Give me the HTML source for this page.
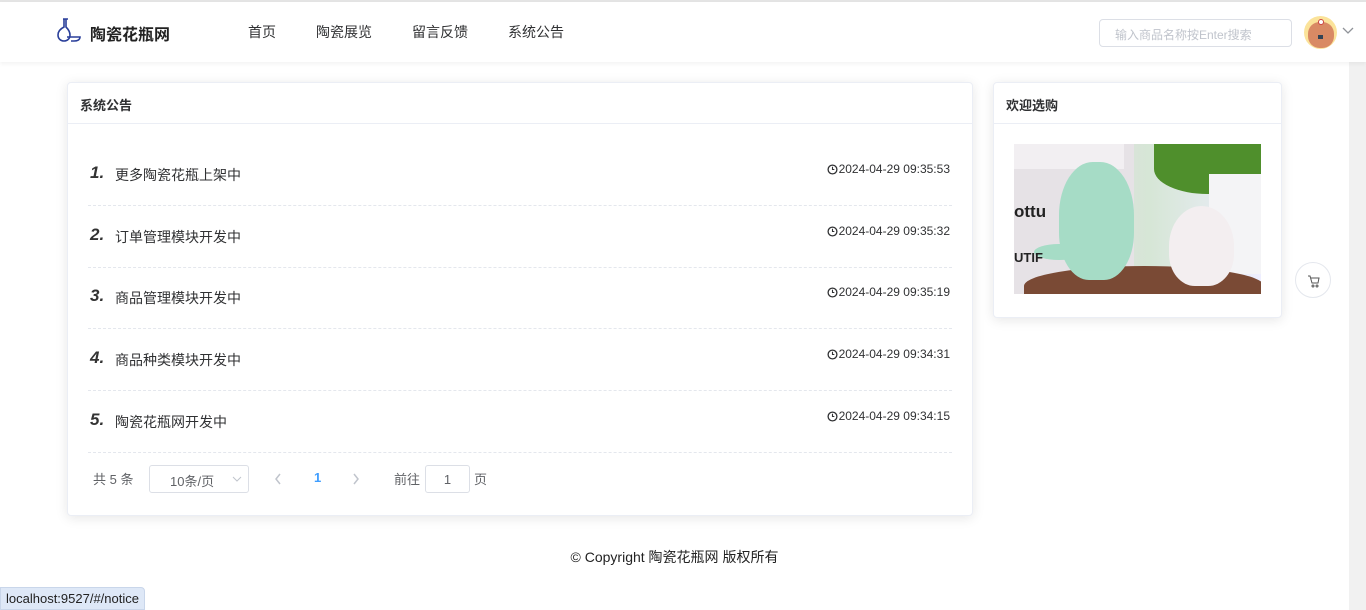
<!DOCTYPE html>
<html><head><meta charset="utf-8"><style>
*{margin:0;padding:0;box-sizing:border-box}
body{width:1366px;height:610px;overflow:hidden;background:#fff;font-family:"Liberation Sans","Noto Sans CJK SC",sans-serif;color:#303133;position:relative}
.topline{position:absolute;left:0;top:0;width:1366px;height:2px;background:#e4e4e4}
.header{position:absolute;left:0;top:2px;width:1366px;height:60px;background:#fff;box-shadow:0 2px 4px rgba(0,0,0,.05);z-index:2}
.logo{position:absolute;left:90px;top:19px;font-size:16px;font-weight:bold;color:#222}
.nav a{position:absolute;top:20px;font-size:14px;color:#303133;text-decoration:none}
.search{position:absolute;left:1099px;top:17px;width:193px;height:28px;border:1px solid #dcdfe6;border-radius:4px;font-size:12px;color:#c0c4cc;padding:6px 15px}
.avatar{position:absolute;left:1304px;top:14px;width:33px;height:33px;border-radius:50%;background:#fbe39a;overflow:hidden}
.scroll{position:absolute;left:1349px;top:62px;width:17px;height:548px;background:#f1f1f1}
.card{position:absolute;background:#fff;border:1px solid #ebeef5;border-radius:4px;box-shadow:0 2px 12px rgba(0,0,0,.1)}
.card .hd{height:41px;border-bottom:1px solid #ebeef5;padding:12px 12px;font-size:13px;font-weight:bold;color:#303133}
.row{position:absolute;left:20px;width:864px;height:62px;border-bottom:1px dashed #e4e7ed}
.row .n{position:absolute;left:2px;top:19px;font-size:17px;font-weight:bold;font-style:italic;color:#333}
.row .t{position:absolute;left:27px;top:21px;font-size:14px;color:#303133}
.row .d{position:absolute;right:2px;top:18px;font-size:12px;color:#303133;display:flex;align-items:center;gap:1px}
.pg{position:absolute;font-size:13px;color:#606266}
.footer{position:absolute;left:0;width:1349px;top:547px;text-align:center;font-size:14px;color:#222}
.url{position:absolute;left:0;top:587px;height:23px;padding:3px 5px;background:#dee8f7;border:1px solid #c9d6ea;border-radius:0 4px 0 0;font-size:13px;color:#222}
</style></head><body>
<div class="topline"></div>
<div class="header">
 <svg style="position:absolute;left:56px;top:15px" width="28" height="28" viewBox="0 0 28 28" fill="none" stroke="#2a3f9a" stroke-width="1.6"><path d="M7 2h5M8 2v8c-4 2-6 5-6 8 0 4 3 6 6 6s6-2 6-6c0-3-2-6-4-8V2"/><path d="M11 20h13c0 3-3 4-6 4h-3"/></svg>
 <div class="logo">陶瓷花瓶网</div>
 <div class="nav"><a style="left:248px">首页</a><a style="left:316px">陶瓷展览</a><a style="left:412px">留言反馈</a><a style="left:508px">系统公告</a></div>
 <div class="search">输入商品名称按Enter搜索</div>
 <div class="avatar"><div style="position:absolute;left:4px;top:6px;width:26px;height:26px;border-radius:45%;background:#d98a64"></div><div style="position:absolute;left:14px;top:3px;width:6px;height:6px;border-radius:50%;background:#fff;border:1px solid #c44"></div><div style="position:absolute;left:14px;top:19px;width:5px;height:4px;background:#345"></div></div>
 <svg style="position:absolute;left:1341px;top:24px" width="14" height="10" viewBox="0 0 14 10"><path d="M2 2l5 5 5-5" stroke="#909399" stroke-width="1.3" fill="none"/></svg>
</div>
<div class="scroll"></div>
<div class="card" style="left:67px;top:82px;width:906px;height:434px">
 <div class="hd">系统公告</div>
 <div class="row" style="top:61px"><span class="n">1.</span><span class="t">更多陶瓷花瓶上架中</span><span class="d"><svg width="11" height="11" viewBox="0 0 12 12"><circle cx="6" cy="6" r="4.8" fill="none" stroke="#303133" stroke-width="1.4"/><path d="M6 3v3h2" stroke="#303133" stroke-width="1.2" fill="none"/></svg>2024-04-29 09:35:53</span></div>
 <div class="row" style="top:123px"><span class="n">2.</span><span class="t">订单管理模块开发中</span><span class="d"><svg width="11" height="11" viewBox="0 0 12 12"><circle cx="6" cy="6" r="4.8" fill="none" stroke="#303133" stroke-width="1.4"/><path d="M6 3v3h2" stroke="#303133" stroke-width="1.2" fill="none"/></svg>2024-04-29 09:35:32</span></div>
 <div class="row" style="top:184px"><span class="n">3.</span><span class="t">商品管理模块开发中</span><span class="d"><svg width="11" height="11" viewBox="0 0 12 12"><circle cx="6" cy="6" r="4.8" fill="none" stroke="#303133" stroke-width="1.4"/><path d="M6 3v3h2" stroke="#303133" stroke-width="1.2" fill="none"/></svg>2024-04-29 09:35:19</span></div>
 <div class="row" style="top:246px"><span class="n">4.</span><span class="t">商品种类模块开发中</span><span class="d"><svg width="11" height="11" viewBox="0 0 12 12"><circle cx="6" cy="6" r="4.8" fill="none" stroke="#303133" stroke-width="1.4"/><path d="M6 3v3h2" stroke="#303133" stroke-width="1.2" fill="none"/></svg>2024-04-29 09:34:31</span></div>
 <div class="row" style="top:308px"><span class="n">5.</span><span class="t">陶瓷花瓶网开发中</span><span class="d"><svg width="11" height="11" viewBox="0 0 12 12"><circle cx="6" cy="6" r="4.8" fill="none" stroke="#303133" stroke-width="1.4"/><path d="M6 3v3h2" stroke="#303133" stroke-width="1.2" fill="none"/></svg>2024-04-29 09:34:15</span></div>
 <span class="pg" style="left:25px;top:386px">共 5 条</span>
 <div style="position:absolute;left:81px;top:382px;width:100px;height:28px;border:1px solid #dcdfe6;border-radius:3px;font-size:13px;color:#606266;padding:5px 0 0 20px">10条/页<svg style="position:absolute;right:6px;top:10px" width="10" height="7"><path d="M1 1l4 4 4-4" stroke="#c0c4cc" fill="none"/></svg></div>
 <svg style="position:absolute;left:206px;top:390px" width="8" height="12"><path d="M6 1L2 6l4 5" stroke="#c0c4cc" stroke-width="1.5" fill="none"/></svg>
 <span class="pg" style="left:246px;top:387px;color:#409eff;font-weight:bold">1</span>
 <svg style="position:absolute;left:284px;top:390px" width="8" height="12"><path d="M2 1l4 5-4 5" stroke="#c0c4cc" stroke-width="1.5" fill="none"/></svg>
 <span class="pg" style="left:326px;top:386px">前往</span>
 <div style="position:absolute;left:357px;top:382px;width:45px;height:28px;border:1px solid #dcdfe6;border-radius:3px;font-size:13px;color:#606266;text-align:center;padding-top:6px">1</div>
 <span class="pg" style="left:406px;top:386px">页</span>
</div>
<div class="card" style="left:993px;top:82px;width:289px;height:236px">
 <div class="hd">欢迎选购</div>
 <div style="position:absolute;left:20px;top:61px;width:247px;height:150px;overflow:hidden;background:linear-gradient(90deg,#eee 0,#ddd 30%,#d6e6d6 55%,#eef 100%)">
  <div style="position:absolute;left:0;top:0;width:120px;height:150px;background:#e6e2e6"></div>
  <div style="position:absolute;left:0;top:0;width:110px;height:25px;background:#f2eff2"></div>
  <div style="position:absolute;left:140px;top:0;width:107px;height:50px;background:#4f8f2c;border-radius:0 0 40% 50%"></div>
  <div style="position:absolute;left:195px;top:30px;width:52px;height:100px;background:#f4f4f6"></div>
  <div style="position:absolute;left:10px;top:122px;width:240px;height:40px;background:#7a4a35;border-radius:50% 50% 0 0"></div>
  <div style="position:absolute;left:45px;top:18px;width:75px;height:118px;background:#a6dcc6;border-radius:45% 45% 40% 40%"></div>
  <div style="position:absolute;left:20px;top:100px;width:50px;height:16px;background:#a6dcc6;border-radius:50%"></div>
  <div style="position:absolute;left:155px;top:62px;width:65px;height:80px;background:#f3eef0;border-radius:50% 50% 40% 40%"></div>
  <span style="position:absolute;left:0;top:58px;font-size:17px;font-weight:bold;color:#222">ottu</span>
  <span style="position:absolute;left:0;top:106px;font-size:13px;font-weight:bold;color:#222">UTIF</span>
 </div>
</div>
<div style="position:absolute;left:1295px;top:262px;width:36px;height:36px;border-radius:50%;border:1px solid #e4e7ed;background:#fff"><svg style="position:absolute;left:11px;top:11px" width="14" height="14" viewBox="0 0 14 14" fill="none" stroke="#555" stroke-width="1"><path d="M1 2h2l2 7h6l1-5H4"/><circle cx="6" cy="12" r="1"/><circle cx="10" cy="12" r="1"/></svg></div>
<div class="footer">© Copyright 陶瓷花瓶网 版权所有</div>
<div class="url">localhost:9527/#/notice</div>
</body></html>
